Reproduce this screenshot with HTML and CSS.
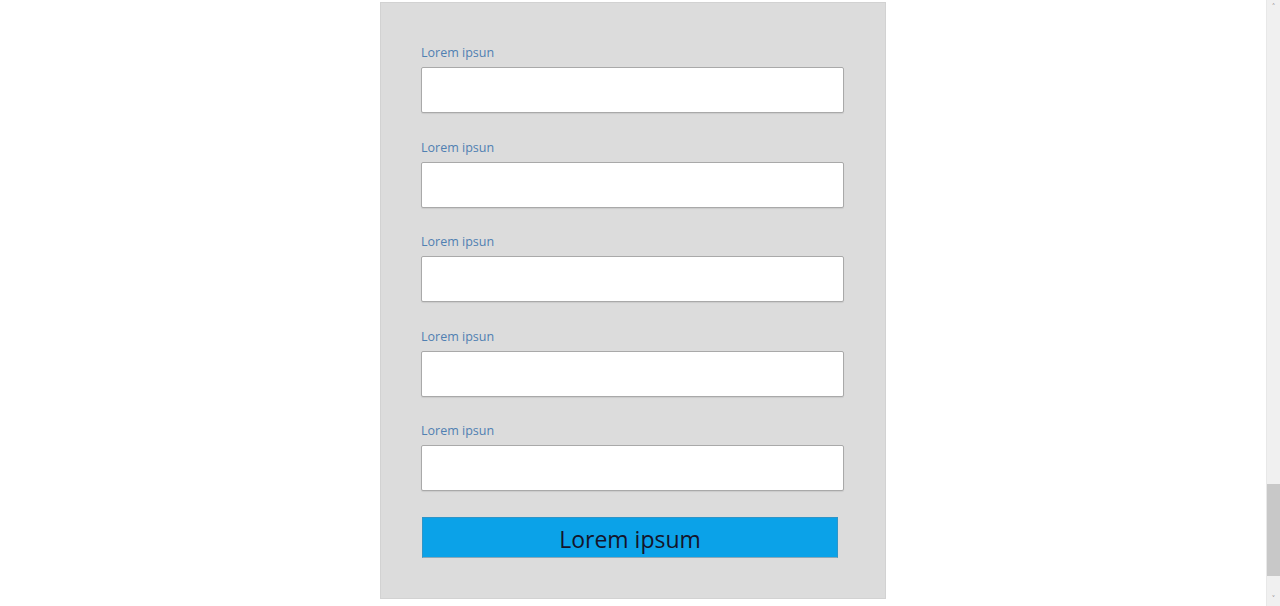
FILE: index.html
```html
<!DOCTYPE html>
<html lang="en">
<head>
    <meta charset="UTF-8">
    <meta name="viewport" content="width=device-width, initial-scale=1.0">
    <title>Formulario</title>
    <link rel="stylesheet" href="styles.css">
</head>
<body>
    <div class="page">
        <div class="container">
            <form onsubmit="return false;">
                <div class="input-group">
                    <label for="campo1">Lorem ipsun</label>
                    <input type="text" id="campo1" name="campo1">
                </div>
                <div class="input-group">
                    <label for="campo2">Lorem ipsun</label>
                    <input type="text" id="campo2" name="campo2">
                </div>
                <div class="input-group">
                    <label for="campo3">Lorem ipsun</label>
                    <input type="text" id="campo3" name="campo3">
                </div>
                <div class="input-group">
                    <label for="campo4">Lorem ipsun</label>
                    <input type="text" id="campo4" name="campo4">
                </div>
                <div class="input-group">
                    <label for="campo5">Lorem ipsun</label>
                    <input type="text" id="campo5" name="campo5">
                </div>
                <button type="submit">Lorem ipsum</button>
            </form>
        </div>
    </div>
    <div class="scrollbar">
        <div class="scroll-arrow">&#708;</div>
        <div class="scroll-track"><div class="scroll-thumb"></div></div>
        <div class="scroll-arrow">&#709;</div>
    </div>
</body>
</html>
```
FILE: styles.css
```css
html, body {
    height: 100%;
}
body {
    font-family: "Open Sans", "Noto Sans", sans-serif;
    margin: 0;
    display: flex;
    background-color: #fff;
    overflow: hidden;
}
.page {
    flex: 1;
    display: flex;
    justify-content: center;
    align-items: flex-start;
}
.container { /* panel gris del formulario */
    width: 506px;
    margin-top: 2px;
    padding: 40px 41px 40px 40px;
    box-sizing: border-box;
    background-color: #dcdcdc;
    border: 1px solid #d2d2d2;
}
.input-group {
    display: flex;
    flex-direction: column;
    margin-bottom: 24.5px;
}
.input-group label {
    color: #5080b2;
    font-size: 12.5px;
    line-height: 18px;
    padding-top: 1px;
    margin-bottom: 5px;
}
.input-group input {
    height: 46px;
    width: 100%;
    box-sizing: border-box;
    border: 1px solid #a9a9a9;
    border-radius: 2px;
    background-color: #fff;
    box-shadow: 0 1px 1px rgba(0, 0, 0, 0.08);
    font-size: 1em;
    padding: 0 8px;
}
.input-group input:focus {
    outline: none;
    border-color: #0ba2e8;
}
button {
    display: block;
    margin-top: 26px;
    margin-left: 1px;
    width: 416px;
    height: 41px;
    background-color: #0ba2e8;
    color: #14142a;
    border: 1px solid #2f95c8;
    border-bottom-color: #8aa8b8;
    font-family: "Open Sans", "Noto Sans", sans-serif;
    font-size: 23px;
    line-height: 41px;
    padding: 1px 0 0 0;
    cursor: pointer;
}

/* barra de desplazamiento dibujada */
.scrollbar {
    width: 14px;
    flex-shrink: 0;
    display: flex;
    flex-direction: column;
    background-color: #f0f0f0;
    border-left: 1px solid #e8e8e8;
    box-sizing: border-box;
}
.scroll-arrow {
    height: 14px;
    font-size: 9px;
    line-height: 14px;
    color: #7a7a7a;
    text-align: center;
}
.scroll-track {
    flex: 1;
    display: flex;
    flex-direction: column;
    justify-content: flex-end;
    padding-bottom: 16px;
}
.scroll-thumb {
    height: 92px;
    background-color: #c8c8c8;
}
```
